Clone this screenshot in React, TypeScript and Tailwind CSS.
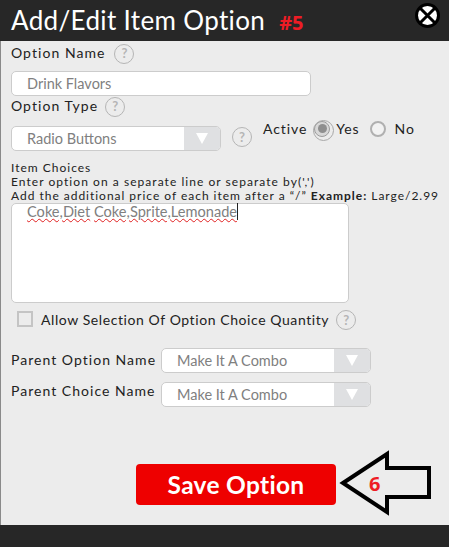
import React from "react";

function Help({ className = "" }: { className?: string }) {
  return (
    <span
      className={`flex h-[20px] w-[20px] shrink-0 items-center justify-center rounded-full border border-[#b5b5b5] text-[13px] font-bold leading-none tracking-normal text-[#b5b5b5] ${className}`}
    >
      ?
    </span>
  );
}

function Select({ value, width }: { value: string; width: string }) {
  return (
    <div className={`flex h-[25px] items-stretch overflow-hidden rounded-[5px] border border-[#cccccc] bg-white ${width}`}>
      <span className="flex-1 pl-[15px] text-[14.5px] leading-[24px] text-[#808080]">{value}</span>
      <span className="flex w-[36px] items-center justify-center bg-[#dfe0e2]">
        <svg width="12" height="11" viewBox="0 0 12 11">
          <path d="M0 0H12L6 11Z" fill="#fff" />
        </svg>
      </span>
    </div>
  );
}

export default function App() {
  return (
    <div className="relative flex h-[547px] w-[449px] flex-col overflow-hidden bg-[#ececec] font-['Lato',sans-serif] text-[#222]">
      {/* header */}
      <div className="flex h-[41px] shrink-0 items-start bg-[#272727] pl-[11px]">
        <h1 className="mt-[3px] text-[26px] font-normal leading-[34px] tracking-[0.35px] text-white">Add/Edit Item Option</h1>
        <span className="ml-[14px] mt-[9px] font-['Open_Sans',sans-serif] text-[20px] font-bold leading-[28px] text-[#ee1c25]">#5</span>
        <span className="ml-auto mr-[9px] mt-[3px]">
          <svg width="25" height="25" viewBox="0 0 25 25">
            <circle cx="12.5" cy="12.5" r="12.5" fill="#000" />
            <circle cx="12.5" cy="12.5" r="9.5" fill="#fff" />
            <path d="M5 5L20 20M20 5L5 20" stroke="#000" strokeWidth="3" />
          </svg>
        </span>
      </div>

      {/* form */}
      <div className="flex flex-1 flex-col border-l border-[#8a8a8a] pl-[10px]">
        <div className="mt-[-1px] flex h-[24px] items-center">
          <span className="text-[14px] tracking-[1.05px]">Option Name</span>
          <Help className="ml-[9px] mt-[3px]" />
        </div>
        <div className="mt-[7px] h-[25px] w-[300px] rounded-[5px] border border-[#cccccc] bg-white pl-[15px] text-[14.5px] leading-[24px] text-[#808080]">
          Drink Flavors
        </div>
        <div className="mt-[-1px] flex h-[20px] items-center">
          <span className="text-[14px] tracking-[1.05px]">Option Type</span>
          <Help className="ml-[7px] mt-[3px]" />
        </div>
        <div className="mt-[11px] flex h-[25px] items-start">
          <Select value="Radio Buttons" width="w-[210px]" />
          <Help className="ml-[11px] mt-[1px]" />
          <div className="ml-[11px] mt-[-8px] flex items-center text-[14px] tracking-[0.9px]">
            <span>Active</span>
            <span className="relative ml-[7px] flex h-[16px] w-[16px] items-center justify-center rounded-full border border-[#9c9c9c] bg-[#d8d8d8]">
              <span className="h-[9px] w-[9px] rounded-full bg-[#8f8f8f]" />
              <span className="absolute left-[-2px] top-[-2px] h-[21px] w-[21px] rounded-full border border-[#a8a8a8]" />
            </span>
            <span className="ml-[6px]">Yes</span>
            <span className="ml-[10px] h-[16px] w-[16px] rounded-full border-2 border-[#b0b0b0] bg-[#f2f2f2]" />
            <span className="ml-[9px]">No</span>
          </div>
        </div>

        <div className="mt-[10px] text-[12px] leading-[14px]">
          <div className="tracking-[1px]">Item Choices</div>
          <div className="tracking-[1.05px]">Enter option on a separate line or separate by(',')</div>
          <div className="whitespace-nowrap tracking-[0.98px]">
            Add the additional price of each item after a “/” <b className="font-bold">Example:</b> Large/2.99
          </div>
        </div>
        <div className="h-[100px] w-[338px] rounded-[5px] border border-[#cccccc] bg-white pl-[15px] text-[14.6px] leading-[15px] text-[#808080]">
          <span className="underline decoration-[#e02020] decoration-wavy decoration-1 underline-offset-1">Coke,Diet</span>{" "}
          <span className="border-r border-[#222] underline decoration-[#e02020] decoration-wavy decoration-1 underline-offset-1">
            Coke,Sprite,Lemonade
          </span>
        </div>

        <div className="ml-[6px] mt-[6px] flex h-[20px] items-center">
          <span className="h-[16px] w-[16px] border-2 border-[#c4c4c4] bg-[#ececec]" />
          <span className="ml-[8px] text-[14px] tracking-[0.58px]">Allow Selection Of Option Choice Quantity</span>
          <Help className="ml-[7px] mt-[2px]" />
        </div>

        <div className="mt-[19px] flex items-start">
          <span className="w-[150px] text-[14px] leading-[24px] tracking-[1.03px]">Parent Option Name</span>
          <Select value="Make It A Combo" width="w-[210px]" />
        </div>
        <div className="mt-[9px] flex items-start">
          <span className="w-[150px] text-[14px] leading-[18px] tracking-[1.03px]">Parent Choice Name</span>
          <Select value="Make It A Combo" width="w-[210px]" />
        </div>

        <button className="ml-[125px] mt-[57px] h-[41px] w-[200px] rounded-[4px] bg-[#ee0000] text-[24.5px] font-bold leading-[38px] tracking-[0.3px] text-white">
          Save Option
        </button>
      </div>

      {/* footer */}
      <div className="h-[22px] shrink-0 bg-[#272727]" />

      {/* annotation arrow */}
      <svg className="absolute left-[338px] top-[450px]" width="98" height="66" viewBox="0 0 98 66">
        <path d="M5 33L49 4V18H91V47H49V62Z" fill="none" stroke="#000" strokeWidth="4" />
      </svg>
      <span className="absolute left-[369px] top-[470px] font-['Open_Sans',sans-serif] text-[20px] font-bold leading-[28px] text-[#ee1c25]">6</span>
    </div>
  );
}
